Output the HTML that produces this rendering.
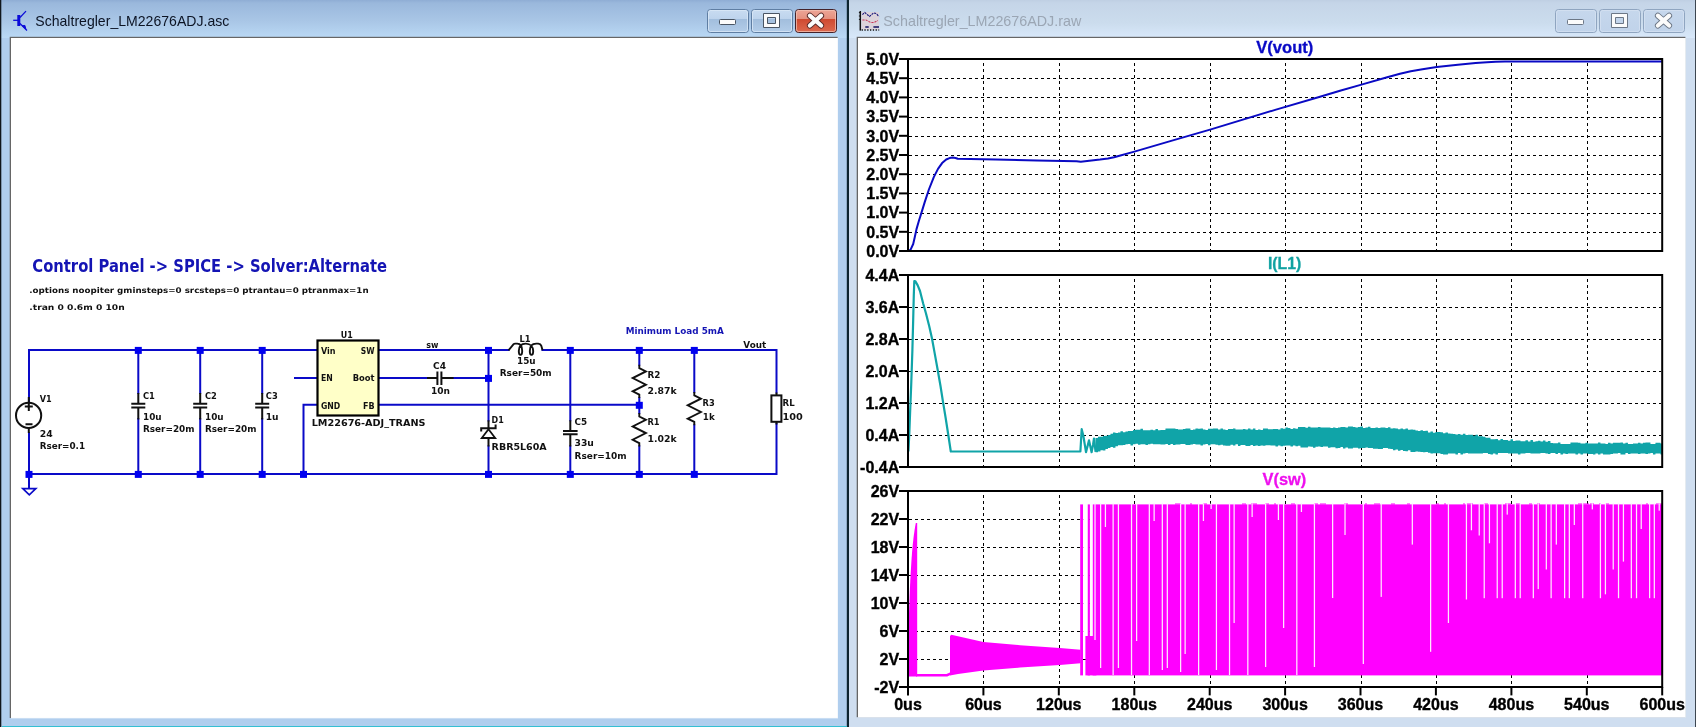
<!DOCTYPE html>
<html lang="de"><head><meta charset="utf-8"><title>Schaltregler_LM22676ADJ - LTspice</title><style>html,body{margin:0;padding:0;background:#fff;overflow:hidden}body{width:1696px;height:727px}svg{will-change:transform}svg text{white-space:pre}</style></head>
<body>
<svg width="1696" height="727" viewBox="0 0 1696 727" style="display:block">
<defs>
<linearGradient id="gAct" x1="0" y1="0" x2="0" y2="1">
 <stop offset="0" stop-color="#8fadd4"/><stop offset="0.08" stop-color="#9ab8dc"/>
 <stop offset="0.55" stop-color="#a9c6e6"/><stop offset="1" stop-color="#bad9f5"/></linearGradient>
<linearGradient id="gIna" x1="0" y1="0" x2="0" y2="1">
 <stop offset="0" stop-color="#bfcfe3"/><stop offset="0.08" stop-color="#c5d5e8"/>
 <stop offset="0.6" stop-color="#cbdced"/><stop offset="1" stop-color="#d8e8fa"/></linearGradient>
<linearGradient id="gBtnA" x1="0" y1="0" x2="0" y2="1">
 <stop offset="0" stop-color="#c9dcf1"/><stop offset="0.42" stop-color="#bdd3ec"/>
 <stop offset="0.43" stop-color="#a2bedd"/><stop offset="1" stop-color="#b3cde9"/></linearGradient>
<linearGradient id="gBtnC" x1="0" y1="0" x2="0" y2="1">
 <stop offset="0" stop-color="#eda697"/><stop offset="0.42" stop-color="#e48f7e"/>
 <stop offset="0.43" stop-color="#cf4a31"/><stop offset="1" stop-color="#dd6a50"/></linearGradient>
<linearGradient id="gBtnI" x1="0" y1="0" x2="0" y2="1">
 <stop offset="0" stop-color="#c6d7ec"/><stop offset="1" stop-color="#c0d3ea"/></linearGradient>
</defs>
<rect x="0" y="0" width="848" height="727" fill="#b0ceee"/>
<rect x="0" y="0" width="848" height="38" fill="url(#gAct)"/>
<rect x="849" y="0" width="847" height="727" fill="#cfdef0"/>
<rect x="849" y="0" width="847" height="38" fill="url(#gIna)"/>
<rect x="0" y="0" width="1.3" height="727" fill="#10161c"/>
<rect x="846.8" y="0" width="2.2" height="727" fill="#0c2430"/>
<rect x="1695" y="0" width="1" height="727" fill="#3c4650"/>
<rect x="2" y="726" width="845" height="1" fill="#35bfd2"/>
<rect x="9.7" y="36.8" width="827.9" height="681.2" fill="#666"/>
<rect x="11" y="38" width="827" height="680.4" fill="#eef4fa"/>
<rect x="11" y="38" width="826.4" height="679.8" fill="#ffffff"/>
<rect x="856.7" y="36.8" width="828.7" height="680.4" fill="#666"/>
<rect x="858" y="38" width="827.8" height="679.6" fill="#eef4fa"/>
<rect x="858" y="38" width="827.2" height="679" fill="#ffffff"/>
<rect x="707.5" y="9.5" width="41" height="23" rx="3" fill="url(#gBtnA)" stroke="#5f7ea3"/>
<rect x="708.5" y="10.5" width="39" height="21" rx="2" fill="none" stroke="#dce9f7" stroke-opacity=".75"/>
<rect x="751.5" y="9.5" width="41" height="23" rx="3" fill="url(#gBtnA)" stroke="#5f7ea3"/>
<rect x="752.5" y="10.5" width="39" height="21" rx="2" fill="none" stroke="#dce9f7" stroke-opacity=".75"/>
<rect x="795.5" y="9.5" width="41" height="23" rx="3" fill="url(#gBtnC)" stroke="#43222a"/>
<rect x="796.5" y="10.5" width="39" height="21" rx="2" fill="none" stroke="#f3c3b6" stroke-opacity=".75"/>
<rect x="719.5" y="19.5" width="16" height="5" rx="1" fill="#fbfbfb" stroke="#4a5563"/>
<path d="M763.5 13.5h16v14h-16z M767.5 17.5v6h8v-6z" fill="#fbfbfb" fill-rule="evenodd" stroke="#4a5563"/>
<path d="M809.9 15.700000000000001L821.1 25.5M821.1 15.700000000000001L809.9 25.5" stroke="#5a2a28" stroke-width="6" stroke-linecap="round" fill="none"/>
<path d="M809.9 15.700000000000001L821.1 25.5M821.1 15.700000000000001L809.9 25.5" stroke="#fbfbfb" stroke-width="4.2" stroke-linecap="round" fill="none"/>
<rect x="1555.5" y="9.5" width="41" height="23" rx="3" fill="url(#gBtnI)" stroke="#8fa5c0"/>
<rect x="1556.5" y="10.5" width="39" height="21" rx="2" fill="none" stroke="#d6e2f1" stroke-opacity=".75"/>
<rect x="1599.5" y="9.5" width="41" height="23" rx="3" fill="url(#gBtnI)" stroke="#8fa5c0"/>
<rect x="1600.5" y="10.5" width="39" height="21" rx="2" fill="none" stroke="#d6e2f1" stroke-opacity=".75"/>
<rect x="1643.5" y="9.5" width="41" height="23" rx="3" fill="url(#gBtnI)" stroke="#8fa5c0"/>
<rect x="1644.5" y="10.5" width="39" height="21" rx="2" fill="none" stroke="#d6e2f1" stroke-opacity=".75"/>
<rect x="1567.5" y="19.5" width="16" height="5" rx="1" fill="#fbfbfb" stroke="#6c7786"/>
<path d="M1611.5 13.5h16v14h-16z M1615.5 17.5v6h8v-6z" fill="#fbfbfb" fill-rule="evenodd" stroke="#6c7786"/>
<path d="M1657.9 15.700000000000001L1669.1 25.5M1669.1 15.700000000000001L1657.9 25.5" stroke="#6c7786" stroke-width="6" stroke-linecap="round" fill="none"/>
<path d="M1657.9 15.700000000000001L1669.1 25.5M1669.1 15.700000000000001L1657.9 25.5" stroke="#fbfbfb" stroke-width="4.2" stroke-linecap="round" fill="none"/>
<g stroke="#0a0ad8" fill="none"><path d="M13.2 20.3H18" stroke-width="1.3"/><path d="M18.8 15v11" stroke-width="3"/><path d="M20 17.5L26 11.2" stroke-width="1.2"/><path d="M20 23.5L27 30.5" stroke-width="1.3"/><path d="M22.3 25.8l2.6 -.4l.9 3.6z" fill="#0a0ad8" stroke-width="1"/></g>
<text x="35.3" y="26.3" font-family='"Liberation Sans", sans-serif' font-size="14.6" fill="#0c1424" textLength="194" lengthAdjust="spacingAndGlyphs">Schaltregler_LM22676ADJ.asc</text>
<g fill="none"><rect x="861.4" y="12" width="17.6" height="17.6" fill="#dcd3da"/><path d="M860.3 11V30.6" stroke="#111" stroke-width="1.5"/><path d="M858.9 12.6h1.4M858.9 16h1.4M858.9 19.4h1.4" stroke="#111" stroke-width="1"/><path d="M861.6 30h17.6" stroke="#111" stroke-width="1.5" stroke-dasharray="1.3 1.5"/><path d="M862.4 14.6L864.7 12.4L869.5 16.5L873.6 12.8L876.4 13.6L878.9 16.5" stroke="#15157a" stroke-width="1.1" stroke-dasharray="2.2 .9"/><path d="M862.4 20H866L870.6 22.5H874L877.8 20.4" stroke="#c83a5a" stroke-width="1.1" stroke-dasharray="2.2 1"/><path d="M865.3 27h3.4M873.4 27h5.6" stroke="#101060" stroke-width="1.4"/></g>
<text x="883.3" y="26.3" font-family='"Liberation Sans", sans-serif' font-size="14.6" fill="#9ba6b4" textLength="198" lengthAdjust="spacingAndGlyphs">Schaltregler_LM22676ADJ.raw</text>
<g stroke="#0a0ac8" stroke-width="2" fill="none" stroke-linecap="square">
<path d="M29 402V350H317"/>
<path d="M29 433V488"/>
<path d="M29 474H776.5V424"/>
<path d="M138.3 350V393M138.3 419V474"/>
<path d="M200.2 350V393M200.2 419V474"/>
<path d="M262.2 350V393M262.2 419V474"/>
<path d="M295 378H317"/>
<path d="M317 404.8H303.5V474"/>
<path d="M379 350H508.5"/>
<path d="M379 378H427M453.5 378H488.5"/>
<path d="M379 404.8H639.3"/>
<path d="M488.5 350V420.5M488.5 446.3V474"/>
<path d="M542.5 350H776.5V392.5"/>
<path d="M570.3 350V420.3M570.3 446.3V474"/>
<path d="M639.3 350V364.7M639.3 398V413.1M639.3 446.3V474"/>
<path d="M694.3 350V392M694.3 425.2V474"/>
<path d="M22.8 488.6H35.8L29.3 494.9Z" stroke-width="1.7" stroke-linecap="butt" stroke-linejoin="miter"/>
</g>
<rect x="134.8" y="346.9" width="7" height="7" fill="#0000f0"/>
<rect x="196.7" y="346.9" width="7" height="7" fill="#0000f0"/>
<rect x="258.7" y="346.9" width="7" height="7" fill="#0000f0"/>
<rect x="485.0" y="346.9" width="7" height="7" fill="#0000f0"/>
<rect x="566.8" y="346.9" width="7" height="7" fill="#0000f0"/>
<rect x="635.8" y="346.9" width="7" height="7" fill="#0000f0"/>
<rect x="690.8" y="346.9" width="7" height="7" fill="#0000f0"/>
<rect x="25.5" y="470.9" width="7" height="7" fill="#0000f0"/>
<rect x="134.8" y="470.9" width="7" height="7" fill="#0000f0"/>
<rect x="196.7" y="470.9" width="7" height="7" fill="#0000f0"/>
<rect x="258.7" y="470.9" width="7" height="7" fill="#0000f0"/>
<rect x="300.0" y="470.9" width="7" height="7" fill="#0000f0"/>
<rect x="485.0" y="470.9" width="7" height="7" fill="#0000f0"/>
<rect x="566.8" y="470.9" width="7" height="7" fill="#0000f0"/>
<rect x="635.8" y="470.9" width="7" height="7" fill="#0000f0"/>
<rect x="690.8" y="470.9" width="7" height="7" fill="#0000f0"/>
<rect x="485.0" y="374.9" width="7" height="7" fill="#0000f0"/>
<rect x="635.8" y="401.8" width="7" height="7" fill="#0000f0"/>
<g stroke="#101010" stroke-width="2" fill="none">
<circle cx="28.6" cy="415.4" r="12.6"/>
<path d="M28.8 397V411M24.8 406.6H32.8M25.5 424.2H32.5M28.8 428V433"/>
<path d="M138.3 393V403.8M131.3 403.8H145.3M131.3 407.4H145.3M138.3 407.4V419.5"/>
<path d="M200.2 393V403.8M193.2 403.8H207.2M193.2 407.4H207.2M200.2 407.4V419.5"/>
<path d="M262.2 393V403.8M255.2 403.8H269.2M255.2 407.4H269.2M262.2 407.4V419.5"/>
<path d="M570.3 420.3V431.1M563.0 431.1H577.5999999999999M563.0 434.3H577.5999999999999M570.3 434.3V446.5"/>
<path d="M427 378H437.4M437.4 371.6V385M441.4 371.6V385M441.4 378H453.6"/>
<rect x="317.5" y="340.5" width="61" height="75" fill="#ffffc8" stroke="#000" stroke-width="2.2"/>
<path d="M488.5 420.3V428.3M488.5 438V446.4" />
<path d="M481.2 431.6V428.3H495.6V424.5" stroke-linejoin="miter"/>
<path d="M488.5 429.3L495.2 438H481.8Z" stroke-width="1.8" stroke-linejoin="miter"/>
<path d="M508.5 350.3L513.6 344.2Q514.2 343.6 515.2 343.6H517.2C520.6 343.6 522.2 347 522.2 351C522.2 356.2 518.8 356.2 518.8 351C518.8 346 521.6 343.6 525.8 343.6C530.6 343.6 533.2 347 533.2 351C533.2 356.2 529.8 356.2 529.8 351C529.8 346 532.2 343.6 536.2 343.6H538.2Q540.6 343.8 541.2 345.6L542.6 350.3" stroke-width="1.9"/>
<path d="M639.3 364.7v3.4l6.6 3.3l-13.2 6.65l13.2 6.65l-13.2 6.65l6.6 3.3v3.4" stroke-linejoin="miter" stroke-width="1.9"/>
<path d="M639.3 413.1v3.4l6.6 3.3l-13.2 6.65l13.2 6.65l-13.2 6.65l6.6 3.3v3.4" stroke-linejoin="miter" stroke-width="1.9"/>
<path d="M694.3 392v3.4l6.6 3.3l-13.2 6.65l13.2 6.65l-13.2 6.65l6.6 3.3v3.4" stroke-linejoin="miter" stroke-width="1.9"/>
<rect x="771.4" y="395.4" width="10" height="26.4" fill="#fff"/>
<path d="M776.5 392.4V395M776.5 422V424.5"/>
</g>
<text x="32.3" y="272.2" font-family='"DejaVu Sans", "Liberation Sans", sans-serif' font-size="17" font-weight="bold" fill="#1414b4" textLength="354.7" lengthAdjust="spacingAndGlyphs">Control Panel -&gt; SPICE -&gt; Solver:Alternate</text>
<text x="29.3" y="293.3" font-family='"DejaVu Sans", "Liberation Sans", sans-serif' font-size="7.9" font-weight="bold" fill="#111" textLength="339.3" lengthAdjust="spacingAndGlyphs">.options noopiter gminsteps=0 srcsteps=0 ptrantau=0 ptranmax=1n</text>
<text x="29.3" y="310.1" font-family='"DejaVu Sans", "Liberation Sans", sans-serif' font-size="7.9" font-weight="bold" fill="#111" textLength="95.4" lengthAdjust="spacingAndGlyphs">.tran 0 0.6m 0 10n</text>
<text x="39.7" y="401.6" font-family='"DejaVu Sans", "Liberation Sans", sans-serif' font-size="8.0" font-weight="bold" fill="#111" textLength="11.9" lengthAdjust="spacingAndGlyphs">V1</text>
<text x="39.7" y="436.6" font-family='"DejaVu Sans", "Liberation Sans", sans-serif' font-size="8.0" font-weight="bold" fill="#111" textLength="12.9" lengthAdjust="spacingAndGlyphs">24</text>
<text x="39.7" y="448.6" font-family='"DejaVu Sans", "Liberation Sans", sans-serif' font-size="8.0" font-weight="bold" fill="#111" textLength="45.4" lengthAdjust="spacingAndGlyphs">Rser=0.1</text>
<text x="143.0" y="398.8" font-family='"DejaVu Sans", "Liberation Sans", sans-serif' font-size="8.0" font-weight="bold" fill="#111" textLength="11.9" lengthAdjust="spacingAndGlyphs">C1</text>
<text x="143.0" y="419.6" font-family='"DejaVu Sans", "Liberation Sans", sans-serif' font-size="8.0" font-weight="bold" fill="#111" textLength="18.6" lengthAdjust="spacingAndGlyphs">10u</text>
<text x="143.0" y="431.6" font-family='"DejaVu Sans", "Liberation Sans", sans-serif' font-size="8.0" font-weight="bold" fill="#111" textLength="51.5" lengthAdjust="spacingAndGlyphs">Rser=20m</text>
<text x="205.0" y="398.8" font-family='"DejaVu Sans", "Liberation Sans", sans-serif' font-size="8.0" font-weight="bold" fill="#111" textLength="11.9" lengthAdjust="spacingAndGlyphs">C2</text>
<text x="205.0" y="419.6" font-family='"DejaVu Sans", "Liberation Sans", sans-serif' font-size="8.0" font-weight="bold" fill="#111" textLength="18.6" lengthAdjust="spacingAndGlyphs">10u</text>
<text x="205.0" y="431.6" font-family='"DejaVu Sans", "Liberation Sans", sans-serif' font-size="8.0" font-weight="bold" fill="#111" textLength="51.5" lengthAdjust="spacingAndGlyphs">Rser=20m</text>
<text x="265.8" y="398.8" font-family='"DejaVu Sans", "Liberation Sans", sans-serif' font-size="8.0" font-weight="bold" fill="#111" textLength="11.9" lengthAdjust="spacingAndGlyphs">C3</text>
<text x="265.8" y="419.6" font-family='"DejaVu Sans", "Liberation Sans", sans-serif' font-size="8.0" font-weight="bold" fill="#111" textLength="12.8" lengthAdjust="spacingAndGlyphs">1u</text>
<text x="340.7" y="337.6" font-family='"DejaVu Sans", "Liberation Sans", sans-serif' font-size="8.0" font-weight="bold" fill="#111" textLength="12.0" lengthAdjust="spacingAndGlyphs">U1</text>
<text x="321.0" y="353.5" font-family='"DejaVu Sans", "Liberation Sans", sans-serif' font-size="8.0" font-weight="bold" fill="#111" textLength="14.6" lengthAdjust="spacingAndGlyphs">Vin</text>
<text x="321.0" y="381.4" font-family='"DejaVu Sans", "Liberation Sans", sans-serif' font-size="8.0" font-weight="bold" fill="#111" textLength="11.8" lengthAdjust="spacingAndGlyphs">EN</text>
<text x="321.0" y="408.5" font-family='"DejaVu Sans", "Liberation Sans", sans-serif' font-size="8.0" font-weight="bold" fill="#111" textLength="19.3" lengthAdjust="spacingAndGlyphs">GND</text>
<text x="360.8" y="353.5" font-family='"DejaVu Sans", "Liberation Sans", sans-serif' font-size="8.0" font-weight="bold" fill="#111" textLength="13.8" lengthAdjust="spacingAndGlyphs">SW</text>
<text x="352.7" y="381.4" font-family='"DejaVu Sans", "Liberation Sans", sans-serif' font-size="8.0" font-weight="bold" fill="#111" textLength="21.9" lengthAdjust="spacingAndGlyphs">Boot</text>
<text x="363.0" y="408.5" font-family='"DejaVu Sans", "Liberation Sans", sans-serif' font-size="8.0" font-weight="bold" fill="#111" textLength="11.6" lengthAdjust="spacingAndGlyphs">FB</text>
<text x="311.7" y="425.8" font-family='"DejaVu Sans", "Liberation Sans", sans-serif' font-size="8.0" font-weight="bold" fill="#111" textLength="113.9" lengthAdjust="spacingAndGlyphs">LM22676-ADJ_TRANS</text>
<text x="426.3" y="347.6" font-family='"DejaVu Sans", "Liberation Sans", sans-serif' font-size="8.0" font-weight="bold" fill="#111" textLength="12.2" lengthAdjust="spacingAndGlyphs">sw</text>
<text x="433.0" y="368.7" font-family='"DejaVu Sans", "Liberation Sans", sans-serif' font-size="8.0" font-weight="bold" fill="#111" textLength="13.0" lengthAdjust="spacingAndGlyphs">C4</text>
<text x="431.0" y="393.7" font-family='"DejaVu Sans", "Liberation Sans", sans-serif' font-size="8.0" font-weight="bold" fill="#111" textLength="19.0" lengthAdjust="spacingAndGlyphs">10n</text>
<text x="519.5" y="341.5" font-family='"DejaVu Sans", "Liberation Sans", sans-serif' font-size="8.0" font-weight="bold" fill="#111" textLength="11.1" lengthAdjust="spacingAndGlyphs">L1</text>
<text x="517.0" y="363.6" font-family='"DejaVu Sans", "Liberation Sans", sans-serif' font-size="8.0" font-weight="bold" fill="#111" textLength="18.6" lengthAdjust="spacingAndGlyphs">15u</text>
<text x="499.7" y="375.5" font-family='"DejaVu Sans", "Liberation Sans", sans-serif' font-size="8.0" font-weight="bold" fill="#111" textLength="52.0" lengthAdjust="spacingAndGlyphs">Rser=50m</text>
<text x="491.6" y="422.7" font-family='"DejaVu Sans", "Liberation Sans", sans-serif' font-size="8.0" font-weight="bold" fill="#111" textLength="12.2" lengthAdjust="spacingAndGlyphs">D1</text>
<text x="491.6" y="449.6" font-family='"DejaVu Sans", "Liberation Sans", sans-serif' font-size="8.0" font-weight="bold" fill="#111" textLength="55.1" lengthAdjust="spacingAndGlyphs">RBR5L60A</text>
<text x="574.6" y="425.3" font-family='"DejaVu Sans", "Liberation Sans", sans-serif' font-size="8.0" font-weight="bold" fill="#111" textLength="12.6" lengthAdjust="spacingAndGlyphs">C5</text>
<text x="574.6" y="446.4" font-family='"DejaVu Sans", "Liberation Sans", sans-serif' font-size="8.0" font-weight="bold" fill="#111" textLength="19.3" lengthAdjust="spacingAndGlyphs">33u</text>
<text x="574.6" y="458.5" font-family='"DejaVu Sans", "Liberation Sans", sans-serif' font-size="8.0" font-weight="bold" fill="#111" textLength="52.1" lengthAdjust="spacingAndGlyphs">Rser=10m</text>
<text x="647.5" y="377.5" font-family='"DejaVu Sans", "Liberation Sans", sans-serif' font-size="8.0" font-weight="bold" fill="#111" textLength="12.9" lengthAdjust="spacingAndGlyphs">R2</text>
<text x="647.5" y="393.7" font-family='"DejaVu Sans", "Liberation Sans", sans-serif' font-size="8.0" font-weight="bold" fill="#111" textLength="29.1" lengthAdjust="spacingAndGlyphs">2.87k</text>
<text x="647.5" y="425.3" font-family='"DejaVu Sans", "Liberation Sans", sans-serif' font-size="8.0" font-weight="bold" fill="#111" textLength="12.1" lengthAdjust="spacingAndGlyphs">R1</text>
<text x="647.5" y="441.5" font-family='"DejaVu Sans", "Liberation Sans", sans-serif' font-size="8.0" font-weight="bold" fill="#111" textLength="29.1" lengthAdjust="spacingAndGlyphs">1.02k</text>
<text x="702.6" y="405.6" font-family='"DejaVu Sans", "Liberation Sans", sans-serif' font-size="8.0" font-weight="bold" fill="#111" textLength="12.1" lengthAdjust="spacingAndGlyphs">R3</text>
<text x="702.8" y="420.3" font-family='"DejaVu Sans", "Liberation Sans", sans-serif' font-size="8.0" font-weight="bold" fill="#111" textLength="11.9" lengthAdjust="spacingAndGlyphs">1k</text>
<text x="782.6" y="405.9" font-family='"DejaVu Sans", "Liberation Sans", sans-serif' font-size="8.0" font-weight="bold" fill="#111" textLength="12.1" lengthAdjust="spacingAndGlyphs">RL</text>
<text x="782.6" y="420.4" font-family='"DejaVu Sans", "Liberation Sans", sans-serif' font-size="8.0" font-weight="bold" fill="#111" textLength="20.3" lengthAdjust="spacingAndGlyphs">100</text>
<text x="625.7" y="334.1" font-family='"DejaVu Sans", "Liberation Sans", sans-serif' font-size="8.0" font-weight="bold" fill="#1414b4" textLength="98.2" lengthAdjust="spacingAndGlyphs">Minimum Load 5mA</text>
<text x="743.3" y="347.9" font-family='"DejaVu Sans", "Liberation Sans", sans-serif' font-size="8.0" font-weight="bold" fill="#111" textLength="22.9" lengthAdjust="spacingAndGlyphs">Vout</text>
<g stroke="#000" stroke-width="1" stroke-dasharray="3 3" shape-rendering="crispEdges">
<path d="M909 78.5H1661.2"/>
<path d="M909 97.5H1661.2"/>
<path d="M909 117.5H1661.2"/>
<path d="M909 136.5H1661.2"/>
<path d="M909 155.5H1661.2"/>
<path d="M909 174.5H1661.2"/>
<path d="M909 193.5H1661.2"/>
<path d="M909 213.5H1661.2"/>
<path d="M909 232.5H1661.2"/>
<path d="M983.5 63V250"/>
<path d="M1059.5 63V250"/>
<path d="M1134.5 63V250"/>
<path d="M1210.5 63V250"/>
<path d="M1285.5 63V250"/>
<path d="M1361.5 63V250"/>
<path d="M1436.5 63V250"/>
<path d="M1511.5 63V250"/>
<path d="M1587.5 63V250"/>
</g>
<polyline fill="none" stroke="#0a0ac4" stroke-width="2" stroke-linejoin="round" points="908.8,251 910.6,249.6 913.2,244 914.8,237 916.5,229.1 919,220.5 921.5,212.6 924.8,201.9 928.9,189.5 933.8,177.1 938,168.9 942.1,163.1 946.2,159.5 949.5,158.1 952.8,157.6 955.5,158 957.8,158.8 995.7,159.5 1037,160.5 1076.6,161.2 1080.8,161.8 1085,161.3 1091.5,160.5 1100,159.6 1108,158.5 1114,157.2 1119.5,155.7 1134.4,151.6 1172,140.6 1210.9,129.4 1276,109.6 1320,96.8 1340,90.8 1360.6,84.9 1387.2,77.2 1400,73.8 1410.8,71.3 1422.5,69.2 1436.7,67.1 1457.9,64.7 1475.6,63.1 1487,62.3 1495.7,61.8 1505,61.6 1662,61.6"/>
<rect x="908" y="59" width="754.2" height="192" fill="none" stroke="#000" stroke-width="2"/>
<path d="M899 59.0H908" stroke="#000" stroke-width="2"/>
<text x="899.2" y="64.8" text-anchor="end" font-family='"Liberation Sans", sans-serif' font-size="16" font-weight="bold" fill="#000" stroke="#000" stroke-width=".35">5.0V</text>
<path d="M899 78.2H908" stroke="#000" stroke-width="2"/>
<text x="899.2" y="84.0" text-anchor="end" font-family='"Liberation Sans", sans-serif' font-size="16" font-weight="bold" fill="#000" stroke="#000" stroke-width=".35">4.5V</text>
<path d="M899 97.4H908" stroke="#000" stroke-width="2"/>
<text x="899.2" y="103.2" text-anchor="end" font-family='"Liberation Sans", sans-serif' font-size="16" font-weight="bold" fill="#000" stroke="#000" stroke-width=".35">4.0V</text>
<path d="M899 116.6H908" stroke="#000" stroke-width="2"/>
<text x="899.2" y="122.4" text-anchor="end" font-family='"Liberation Sans", sans-serif' font-size="16" font-weight="bold" fill="#000" stroke="#000" stroke-width=".35">3.5V</text>
<path d="M899 135.8H908" stroke="#000" stroke-width="2"/>
<text x="899.2" y="141.6" text-anchor="end" font-family='"Liberation Sans", sans-serif' font-size="16" font-weight="bold" fill="#000" stroke="#000" stroke-width=".35">3.0V</text>
<path d="M899 155.0H908" stroke="#000" stroke-width="2"/>
<text x="899.2" y="160.8" text-anchor="end" font-family='"Liberation Sans", sans-serif' font-size="16" font-weight="bold" fill="#000" stroke="#000" stroke-width=".35">2.5V</text>
<path d="M899 174.2H908" stroke="#000" stroke-width="2"/>
<text x="899.2" y="180.0" text-anchor="end" font-family='"Liberation Sans", sans-serif' font-size="16" font-weight="bold" fill="#000" stroke="#000" stroke-width=".35">2.0V</text>
<path d="M899 193.4H908" stroke="#000" stroke-width="2"/>
<text x="899.2" y="199.2" text-anchor="end" font-family='"Liberation Sans", sans-serif' font-size="16" font-weight="bold" fill="#000" stroke="#000" stroke-width=".35">1.5V</text>
<path d="M899 212.6H908" stroke="#000" stroke-width="2"/>
<text x="899.2" y="218.4" text-anchor="end" font-family='"Liberation Sans", sans-serif' font-size="16" font-weight="bold" fill="#000" stroke="#000" stroke-width=".35">1.0V</text>
<path d="M899 231.8H908" stroke="#000" stroke-width="2"/>
<text x="899.2" y="237.6" text-anchor="end" font-family='"Liberation Sans", sans-serif' font-size="16" font-weight="bold" fill="#000" stroke="#000" stroke-width=".35">0.5V</text>
<path d="M899 251.0H908" stroke="#000" stroke-width="2"/>
<text x="899.2" y="256.8" text-anchor="end" font-family='"Liberation Sans", sans-serif' font-size="16" font-weight="bold" fill="#000" stroke="#000" stroke-width=".35">0.0V</text>
<text x="1256.3" y="52.6" font-family='"Liberation Sans", sans-serif' textLength="57.0" lengthAdjust="spacingAndGlyphs" font-size="16" font-weight="bold" fill="#0a0ac6" stroke="#0a0ac6" stroke-width=".3">V(vout)</text>
<g stroke="#000" stroke-width="1" stroke-dasharray="3 3" shape-rendering="crispEdges">
<path d="M909 307.5H1661.2"/>
<path d="M909 339.5H1661.2"/>
<path d="M909 371.5H1661.2"/>
<path d="M909 403.5H1661.2"/>
<path d="M909 435.5H1661.2"/>
<path d="M983.5 279V466"/>
<path d="M1059.5 279V466"/>
<path d="M1134.5 279V466"/>
<path d="M1210.5 279V466"/>
<path d="M1285.5 279V466"/>
<path d="M1361.5 279V466"/>
<path d="M1436.5 279V466"/>
<path d="M1511.5 279V466"/>
<path d="M1587.5 279V466"/>
</g>
<polyline fill="none" stroke="#10a4a8" stroke-width="2.2" stroke-linejoin="round" points="908.4,451.5 909.3,433.6 910.2,410 911.2,385 912.4,350 913.2,319.4 913.8,295 914.3,281 915.4,281.3 917.7,285.4 920,291 923.1,303.3 926,313.5 929.3,326.6 932,338.5 934.7,353.4 937.7,370 940.5,386 943,401.8 945.5,417 948.3,435 950.8,451.5 1080.4,451.5 1081.7,429.2 1083.4,436 1086,452.2 1087.6,446 1089,440.3 1091.6,452.2 1093,445 1094,438.5 1095.6,451.8"/>
<polygon fill="#10a4a8" points="1095.5,437.9 1097.9,437.9 1098.0,436.7 1100.4,436.7 1100.5,436.8 1102.9,436.8 1103.0,436.1 1105.4,436.1 1105.5,435.8 1107.9,435.8 1108.0,435.0 1110.4,435.0 1110.5,433.8 1112.9,433.8 1113.0,432.4 1115.4,432.4 1115.5,433.0 1117.9,433.0 1118.0,432.6 1120.4,432.6 1120.5,431.2 1122.9,431.2 1123.0,432.3 1125.4,432.3 1125.5,431.4 1127.9,431.4 1128.0,430.9 1130.4,430.9 1130.5,430.9 1132.9,430.9 1133.0,430.0 1135.4,430.0 1135.5,429.8 1137.9,429.8 1138.0,429.8 1140.4,429.8 1140.5,428.8 1142.9,428.8 1143.0,430.2 1145.4,430.2 1145.5,430.2 1147.9,430.2 1148.0,430.2 1150.4,430.2 1150.5,429.7 1152.9,429.7 1153.0,430.2 1155.4,430.2 1155.5,429.1 1157.9,429.1 1158.0,430.2 1160.4,430.2 1160.5,430.1 1162.9,430.1 1163.0,430.1 1165.4,430.1 1165.5,428.6 1167.9,428.6 1168.0,428.6 1170.4,428.6 1170.5,428.6 1172.9,428.6 1173.0,428.6 1175.4,428.6 1175.5,428.9 1177.9,428.9 1178.0,429.5 1180.4,429.5 1180.5,429.5 1182.9,429.5 1183.0,428.9 1185.4,428.9 1185.5,428.5 1187.9,428.5 1188.0,428.5 1190.4,428.5 1190.5,430.0 1192.9,430.0 1193.0,429.4 1195.4,429.4 1195.5,428.4 1197.9,428.4 1198.0,428.8 1200.4,428.8 1200.5,428.4 1202.9,428.4 1203.0,429.4 1205.4,429.4 1205.5,429.9 1207.9,429.9 1208.0,428.8 1210.4,428.8 1210.5,428.8 1212.9,428.8 1213.0,428.4 1215.4,428.4 1215.5,428.5 1217.9,428.5 1218.0,429.5 1220.4,429.5 1220.5,428.5 1222.9,428.5 1223.0,429.5 1225.4,429.5 1225.5,430.0 1227.9,430.0 1228.0,428.9 1230.4,428.9 1230.5,428.9 1232.9,428.9 1233.0,428.5 1235.4,428.5 1235.5,429.5 1237.9,429.5 1238.0,429.5 1240.4,429.5 1240.5,429.5 1242.9,429.5 1243.0,428.9 1245.4,428.9 1245.5,429.6 1247.9,429.6 1248.0,428.6 1250.4,428.6 1250.5,429.6 1252.9,429.6 1253.0,428.6 1255.4,428.6 1255.5,430.1 1257.9,430.1 1258.0,429.6 1260.4,429.6 1260.5,430.1 1262.9,430.1 1263.0,428.5 1265.4,428.5 1265.5,428.4 1267.9,428.4 1268.0,429.3 1270.4,429.3 1270.5,429.2 1272.9,429.2 1273.0,429.1 1275.4,429.1 1275.5,429.0 1277.9,429.0 1278.0,429.4 1280.4,429.4 1280.5,428.2 1282.9,428.2 1283.0,428.7 1285.4,428.7 1285.5,427.6 1287.9,427.6 1288.0,427.9 1290.4,427.9 1290.5,428.9 1292.9,428.9 1293.0,428.3 1295.4,428.3 1295.5,428.7 1297.9,428.7 1298.0,427.1 1300.4,427.1 1300.5,427.0 1302.9,427.0 1303.0,426.9 1305.4,426.9 1305.5,427.8 1307.9,427.8 1308.0,426.7 1310.4,426.7 1310.5,427.6 1312.9,427.6 1313.0,427.6 1315.4,427.6 1315.5,427.6 1317.9,427.6 1318.0,427.0 1320.4,427.0 1320.5,427.6 1322.9,427.6 1323.0,427.6 1325.4,427.6 1325.5,427.6 1327.9,427.6 1328.0,427.6 1330.4,427.6 1330.5,428.0 1332.9,428.0 1333.0,427.5 1335.4,427.5 1335.5,428.0 1337.9,428.0 1338.0,427.5 1340.4,427.5 1340.5,426.9 1342.9,426.9 1343.0,426.9 1345.4,426.9 1345.5,427.5 1347.9,427.5 1348.0,426.5 1350.4,426.5 1350.5,426.5 1352.9,426.5 1353.0,426.9 1355.4,426.9 1355.5,427.5 1357.9,427.5 1358.0,426.9 1360.4,426.9 1360.5,426.5 1362.9,426.5 1363.0,428.0 1365.4,428.0 1365.5,427.4 1367.9,427.4 1368.0,426.8 1370.4,426.8 1370.5,427.9 1372.9,427.9 1373.0,427.9 1375.4,427.9 1375.5,427.4 1377.9,427.4 1378.0,427.9 1380.4,427.9 1380.5,427.4 1382.9,427.4 1383.0,427.4 1385.4,427.4 1385.5,428.1 1387.9,428.1 1388.0,427.2 1390.4,427.2 1390.5,428.5 1392.9,428.5 1393.0,428.3 1395.4,428.3 1395.5,428.5 1397.9,428.5 1398.0,429.3 1400.4,429.3 1400.5,428.4 1402.9,428.4 1403.0,429.3 1405.4,429.3 1405.5,428.5 1407.9,428.5 1408.0,429.7 1410.4,429.7 1410.5,429.4 1412.9,429.4 1413.0,429.7 1415.4,429.7 1415.5,430.6 1417.9,430.6 1418.0,430.9 1420.4,430.9 1420.5,430.2 1422.9,430.2 1423.0,430.9 1425.4,430.9 1425.5,430.8 1427.9,430.8 1428.0,432.6 1430.4,432.6 1430.5,431.4 1432.9,431.4 1433.0,432.8 1435.4,432.8 1435.5,431.9 1437.9,431.9 1438.0,432.0 1440.4,432.0 1440.5,432.2 1442.9,432.2 1443.0,433.3 1445.4,433.3 1445.5,432.5 1447.9,432.5 1448.0,433.6 1450.4,433.6 1450.5,433.7 1452.9,433.7 1453.0,433.9 1455.4,433.9 1455.5,434.5 1457.9,434.5 1458.0,434.1 1460.4,434.1 1460.5,434.8 1462.9,434.8 1463.0,433.8 1465.4,433.8 1465.5,435.0 1467.9,435.0 1468.0,434.7 1470.4,434.7 1470.5,434.8 1472.9,434.8 1473.0,435.8 1475.4,435.8 1475.5,434.8 1477.9,434.8 1478.0,436.3 1480.4,436.3 1480.5,436.2 1482.9,436.2 1483.0,436.7 1485.4,436.7 1485.5,437.8 1487.9,437.8 1488.0,437.7 1490.4,437.7 1490.5,439.3 1492.9,439.3 1493.0,439.2 1495.4,439.2 1495.5,439.1 1497.9,439.1 1498.0,440.3 1500.4,440.3 1500.5,438.9 1502.9,438.9 1503.0,440.0 1505.4,440.0 1505.5,440.1 1507.9,440.1 1508.0,440.7 1510.4,440.7 1510.5,439.3 1512.9,439.3 1513.0,440.9 1515.4,440.9 1515.5,440.5 1517.9,440.5 1518.0,440.6 1520.4,440.6 1520.5,441.2 1522.9,441.2 1523.0,441.3 1525.4,441.3 1525.5,440.3 1527.9,440.3 1528.0,441.5 1530.4,441.5 1530.5,440.1 1532.9,440.1 1533.0,441.7 1535.4,441.7 1535.5,441.3 1537.9,441.3 1538.0,440.8 1540.4,440.8 1540.5,441.5 1542.9,441.5 1543.0,440.6 1545.4,440.6 1545.5,441.8 1547.9,441.8 1548.0,441.1 1550.4,441.1 1550.5,443.0 1552.9,443.0 1553.0,443.3 1555.4,443.3 1555.5,443.2 1557.9,443.2 1558.0,442.4 1560.4,442.4 1560.5,443.9 1562.9,443.9 1563.0,443.9 1565.4,443.9 1565.5,443.9 1567.9,443.9 1568.0,443.9 1570.4,443.9 1570.5,442.4 1572.9,442.4 1573.0,442.4 1575.4,442.4 1575.5,442.4 1577.9,442.4 1578.0,442.8 1580.4,442.8 1580.5,443.4 1582.9,443.4 1583.0,443.4 1585.4,443.4 1585.5,442.8 1587.9,442.8 1588.0,443.4 1590.4,443.4 1590.5,443.4 1592.9,443.4 1593.0,443.4 1595.4,443.4 1595.5,443.4 1597.9,443.4 1598.0,442.4 1600.4,442.4 1600.5,443.4 1602.9,443.4 1603.0,443.4 1605.4,443.4 1605.5,443.9 1607.9,443.9 1608.0,442.8 1610.4,442.8 1610.5,443.4 1612.9,443.4 1613.0,442.8 1615.4,442.8 1615.5,442.8 1617.9,442.8 1618.0,442.8 1620.4,442.8 1620.5,442.4 1622.9,442.4 1623.0,443.4 1625.4,443.4 1625.5,442.8 1627.9,442.8 1628.0,443.9 1630.4,443.9 1630.5,443.9 1632.9,443.9 1633.0,443.4 1635.4,443.4 1635.5,443.4 1637.9,443.4 1638.0,442.8 1640.4,442.8 1640.5,443.4 1642.9,443.4 1643.0,442.8 1645.4,442.8 1645.5,442.4 1647.9,442.4 1648.0,442.4 1650.4,442.4 1650.5,443.9 1652.9,443.9 1653.0,443.9 1655.4,443.9 1655.5,442.8 1657.9,442.8 1658.0,442.8 1660.4,442.8 1660.5,443.4 1662.2,443.4 1662.2,454.5 1660.5,454.5 1660.4,453.5 1658.0,453.5 1657.9,453.5 1655.5,453.5 1655.4,454.5 1653.0,454.5 1652.9,453.0 1650.5,453.0 1650.4,453.5 1648.0,453.5 1647.9,454.1 1645.5,454.1 1645.4,453.5 1643.0,453.5 1642.9,453.5 1640.5,453.5 1640.4,454.1 1638.0,454.1 1637.9,453.5 1635.5,453.5 1635.4,453.5 1633.0,453.5 1632.9,453.5 1630.5,453.5 1630.4,454.1 1628.0,454.1 1627.9,453.0 1625.5,453.0 1625.4,454.5 1623.0,454.5 1622.9,454.5 1620.5,454.5 1620.4,453.0 1618.0,453.0 1617.9,453.5 1615.5,453.5 1615.4,453.5 1613.0,453.5 1612.9,454.1 1610.5,454.1 1610.4,454.5 1608.0,454.5 1607.9,454.5 1605.5,454.5 1605.4,454.5 1603.0,454.5 1602.9,453.5 1600.5,453.5 1600.4,454.5 1598.0,454.5 1597.9,453.5 1595.5,453.5 1595.4,454.5 1593.0,454.5 1592.9,454.1 1590.5,454.1 1590.4,454.1 1588.0,454.1 1587.9,453.5 1585.5,453.5 1585.4,453.5 1583.0,453.5 1582.9,454.5 1580.5,454.5 1580.4,453.5 1578.0,453.5 1577.9,454.5 1575.5,454.5 1575.4,453.5 1573.0,453.5 1572.9,453.5 1570.5,453.5 1570.4,453.5 1568.0,453.5 1567.9,454.1 1565.5,454.1 1565.4,453.5 1563.0,453.5 1562.9,454.5 1560.5,454.5 1560.4,453.0 1558.0,453.0 1557.9,454.1 1555.5,454.1 1555.4,453.0 1553.0,453.0 1552.9,453.0 1550.5,453.0 1550.4,454.1 1548.0,454.1 1547.9,453.5 1545.5,453.5 1545.4,453.0 1543.0,453.0 1542.9,453.0 1540.5,453.0 1540.4,453.5 1538.0,453.5 1537.9,453.5 1535.5,453.5 1535.4,453.5 1533.0,453.5 1532.9,453.5 1530.5,453.5 1530.4,453.0 1528.0,453.0 1527.9,453.0 1525.5,453.0 1525.4,453.5 1523.0,453.5 1522.9,453.5 1520.5,453.5 1520.4,454.5 1518.0,454.5 1517.9,453.5 1515.5,453.5 1515.4,453.5 1513.0,453.5 1512.9,453.5 1510.5,453.5 1510.4,453.5 1508.0,453.5 1507.9,453.0 1505.5,453.0 1505.4,453.0 1503.0,453.0 1502.9,453.0 1500.5,453.0 1500.4,453.0 1498.0,453.0 1497.9,454.5 1495.5,454.5 1495.4,453.5 1493.0,453.5 1492.9,454.5 1490.5,454.5 1490.4,454.1 1488.0,454.1 1487.9,453.0 1485.5,453.0 1485.4,453.0 1483.0,453.0 1482.9,453.5 1480.5,453.5 1480.4,453.5 1478.0,453.5 1477.9,453.5 1475.5,453.5 1475.4,453.5 1473.0,453.5 1472.9,453.5 1470.5,453.5 1470.4,453.5 1468.0,453.5 1467.9,453.0 1465.5,453.0 1465.4,453.5 1463.0,453.5 1462.9,454.4 1460.5,454.4 1460.4,452.9 1458.0,452.9 1457.9,454.4 1455.5,454.4 1455.4,453.4 1453.0,453.4 1452.9,453.4 1450.5,453.4 1450.4,453.4 1448.0,453.4 1447.9,454.4 1445.5,454.4 1445.4,454.4 1443.0,454.4 1442.9,453.9 1440.5,453.9 1440.4,453.3 1438.0,453.3 1437.9,453.3 1435.5,453.3 1435.4,453.3 1433.0,453.3 1432.9,453.6 1430.5,453.6 1430.4,452.8 1428.0,452.8 1427.9,452.0 1425.5,452.0 1425.4,452.3 1423.0,452.3 1422.9,452.1 1420.5,452.1 1420.4,451.8 1418.0,451.8 1417.9,451.6 1415.5,451.6 1415.4,451.9 1413.0,451.9 1412.9,452.1 1410.5,452.1 1410.4,450.3 1408.0,450.3 1407.9,451.2 1405.5,451.2 1405.4,450.9 1403.0,450.9 1402.9,450.1 1400.5,450.1 1400.4,450.8 1398.0,450.8 1397.9,449.6 1395.5,449.6 1395.4,450.3 1393.0,450.3 1392.9,449.1 1390.5,449.1 1390.4,448.8 1388.0,448.8 1387.9,448.1 1385.5,448.1 1385.4,447.9 1383.0,447.9 1382.9,448.9 1380.5,448.9 1380.4,448.9 1378.0,448.9 1377.9,448.8 1375.5,448.8 1375.4,448.8 1373.0,448.8 1372.9,448.1 1370.5,448.1 1370.4,448.0 1368.0,448.0 1367.9,447.5 1365.5,447.5 1365.4,447.9 1363.0,447.9 1362.9,447.9 1360.5,447.9 1360.4,448.4 1358.0,448.4 1357.9,447.8 1355.5,447.8 1355.4,447.7 1353.0,447.7 1352.9,448.6 1350.5,448.6 1350.4,448.6 1348.0,448.6 1347.9,447.5 1345.5,447.5 1345.4,448.5 1343.0,448.5 1342.9,446.9 1340.5,446.9 1340.4,448.0 1338.0,448.0 1337.9,448.3 1335.5,448.3 1335.4,447.2 1333.0,447.2 1332.9,447.2 1330.5,447.2 1330.4,447.7 1328.0,447.7 1327.9,446.6 1325.5,446.6 1325.4,446.5 1323.0,446.5 1322.9,447.0 1320.5,447.0 1320.4,446.4 1318.0,446.4 1317.9,446.8 1315.5,446.8 1315.4,447.8 1313.0,447.8 1312.9,446.7 1310.5,446.7 1310.4,446.6 1308.0,446.6 1307.9,447.6 1305.5,447.6 1305.4,447.5 1303.0,447.5 1302.9,447.4 1300.5,447.4 1300.4,445.8 1298.0,445.8 1297.9,446.2 1295.5,446.2 1295.4,445.6 1293.0,445.6 1292.9,446.6 1290.5,446.6 1290.4,445.5 1288.0,445.5 1287.9,445.4 1285.5,445.4 1285.4,445.8 1283.0,445.8 1282.9,446.3 1280.5,446.3 1280.4,445.6 1278.0,445.6 1277.9,446.5 1275.5,446.5 1275.4,445.4 1273.0,445.4 1272.9,445.4 1270.5,445.4 1270.4,445.3 1268.0,445.3 1267.9,445.2 1265.5,445.2 1265.4,445.7 1263.0,445.7 1262.9,445.6 1260.5,445.6 1260.4,446.0 1258.0,446.0 1257.9,445.6 1255.5,445.6 1255.4,446.0 1253.0,446.0 1252.9,444.9 1250.5,444.9 1250.4,445.9 1248.0,445.9 1247.9,445.9 1245.5,445.9 1245.4,444.9 1243.0,444.9 1242.9,444.9 1240.5,444.9 1240.4,445.9 1238.0,445.9 1237.9,444.3 1235.5,444.3 1235.4,445.4 1233.0,445.4 1232.9,444.8 1230.5,444.8 1230.4,445.8 1228.0,445.8 1227.9,445.8 1225.5,445.8 1225.4,445.4 1223.0,445.4 1222.9,444.7 1220.5,444.7 1220.4,445.3 1218.0,445.3 1217.9,444.7 1215.5,444.7 1215.4,444.2 1213.0,444.2 1212.9,444.2 1210.5,444.2 1210.4,445.3 1208.0,445.3 1207.9,444.1 1205.5,444.1 1205.4,444.6 1203.0,444.6 1202.9,445.6 1200.5,445.6 1200.4,444.6 1198.0,444.6 1197.9,444.6 1195.5,444.6 1195.4,444.1 1193.0,444.1 1192.9,444.5 1190.5,444.5 1190.4,445.1 1188.0,445.1 1187.9,445.1 1185.5,445.1 1185.4,444.0 1183.0,444.0 1182.9,444.0 1180.5,444.0 1180.4,444.5 1178.0,444.5 1177.9,444.5 1175.5,444.5 1175.4,445.0 1173.0,445.0 1172.9,443.9 1170.5,443.9 1170.4,445.0 1168.0,445.0 1167.9,443.9 1165.5,443.9 1165.4,444.4 1163.0,444.4 1162.9,444.4 1160.5,444.4 1160.4,444.3 1158.0,444.3 1157.9,444.3 1155.5,444.3 1155.4,444.3 1153.0,444.3 1152.9,443.8 1150.5,443.8 1150.4,444.3 1148.0,444.3 1147.9,444.9 1145.5,444.9 1145.4,444.3 1143.0,444.3 1142.9,444.2 1140.5,444.2 1140.4,444.8 1138.0,444.8 1137.9,443.7 1135.5,443.7 1135.4,444.3 1133.0,444.3 1132.9,445.4 1130.5,445.4 1130.4,444.1 1128.0,444.1 1127.9,444.3 1125.5,444.3 1125.4,444.9 1123.0,444.9 1122.9,445.3 1120.5,445.3 1120.4,445.2 1118.0,445.2 1117.9,446.2 1115.5,446.2 1115.4,447.7 1113.0,447.7 1112.9,447.1 1110.5,447.1 1110.4,447.9 1108.0,447.9 1107.9,448.9 1105.5,448.9 1105.4,450.4 1103.0,450.4 1102.9,450.3 1100.5,450.3 1100.4,451.6 1098.0,451.6 1097.9,452.3 1095.5,452.3"/>
<rect x="908" y="275" width="754.2" height="192" fill="none" stroke="#000" stroke-width="2"/>
<path d="M899 275.0H908" stroke="#000" stroke-width="2"/>
<text x="899.2" y="280.8" text-anchor="end" font-family='"Liberation Sans", sans-serif' font-size="16" font-weight="bold" fill="#000" stroke="#000" stroke-width=".35">4.4A</text>
<path d="M899 307.0H908" stroke="#000" stroke-width="2"/>
<text x="899.2" y="312.8" text-anchor="end" font-family='"Liberation Sans", sans-serif' font-size="16" font-weight="bold" fill="#000" stroke="#000" stroke-width=".35">3.6A</text>
<path d="M899 339.0H908" stroke="#000" stroke-width="2"/>
<text x="899.2" y="344.8" text-anchor="end" font-family='"Liberation Sans", sans-serif' font-size="16" font-weight="bold" fill="#000" stroke="#000" stroke-width=".35">2.8A</text>
<path d="M899 371.0H908" stroke="#000" stroke-width="2"/>
<text x="899.2" y="376.8" text-anchor="end" font-family='"Liberation Sans", sans-serif' font-size="16" font-weight="bold" fill="#000" stroke="#000" stroke-width=".35">2.0A</text>
<path d="M899 403.0H908" stroke="#000" stroke-width="2"/>
<text x="899.2" y="408.8" text-anchor="end" font-family='"Liberation Sans", sans-serif' font-size="16" font-weight="bold" fill="#000" stroke="#000" stroke-width=".35">1.2A</text>
<path d="M899 435.0H908" stroke="#000" stroke-width="2"/>
<text x="899.2" y="440.8" text-anchor="end" font-family='"Liberation Sans", sans-serif' font-size="16" font-weight="bold" fill="#000" stroke="#000" stroke-width=".35">0.4A</text>
<path d="M899 467.0H908" stroke="#000" stroke-width="2"/>
<text x="899.2" y="472.8" text-anchor="end" font-family='"Liberation Sans", sans-serif' font-size="16" font-weight="bold" fill="#000" stroke="#000" stroke-width=".35">-0.4A</text>
<text x="1267.9" y="268.7" font-family='"Liberation Sans", sans-serif' textLength="33.4" lengthAdjust="spacingAndGlyphs" font-size="16" font-weight="bold" fill="#12a2a2" stroke="#12a2a2" stroke-width=".3">I(L1)</text>
<g stroke="#000" stroke-width="1" stroke-dasharray="3 3" shape-rendering="crispEdges">
<path d="M909 519.5H1661.2"/>
<path d="M909 547.5H1661.2"/>
<path d="M909 575.5H1661.2"/>
<path d="M909 603.5H1661.2"/>
<path d="M909 631.5H1661.2"/>
<path d="M909 659.5H1661.2"/>
<path d="M983.5 495V686"/>
<path d="M1059.5 495V686"/>
<path d="M1134.5 495V686"/>
<path d="M1210.5 495V686"/>
<path d="M1285.5 495V686"/>
<path d="M1361.5 495V686"/>
<path d="M1436.5 495V686"/>
<path d="M1511.5 495V686"/>
<path d="M1587.5 495V686"/>
</g>
<path d="M908.3 676.6V640Q909.5 585 912 553Q913.6 534 915.8 523H917.2V676.6Z" fill="#ff00ff"/>
<path d="M916 675.2H947L950.5 673.6" stroke="#ff00ff" stroke-width="2.6" fill="none"/>
<path d="M950 675.5V636L951.3 634.8L983.4 642L1020 645.2L1059.8 648L1080.6 649.8V663.2L1059.8 665L1020 667.6L983.4 670.6L958 674Z" fill="#ff00ff"/>
<rect x="1080.2" y="504.4" width="2.8" height="171.0" fill="#ff00ff"/>
<rect x="1085.4" y="636" width="11" height="39.39999999999998" fill="#ff00ff"/>
<rect x="1087.6" y="504.4" width="2.3" height="171.0" fill="#ff00ff"/>
<rect x="1092.6" y="504.4" width="569.6000000000001" height="171.0" fill="#ff00ff"/>
<path d="M1175 503.4h6v1.2h-6zM1190 503.4h2v1.2h-2zM1203 503.4h4v1.2h-4zM1242 503.4h4v1.2h-4zM1251 503.4h6v1.2h-6zM1265 503.4h4v1.2h-4zM1274 503.4h2v1.2h-2zM1291 503.4h4v1.2h-4zM1314 503.4h4v1.2h-4zM1320 503.4h6v1.2h-6zM1344 503.4h4v1.2h-4zM1365 503.4h2v1.2h-2zM1374 503.4h6v1.2h-6zM1391 503.4h4v1.2h-4zM1407 503.4h3v1.2h-3zM1436 503.4h3v1.2h-3zM1444 503.4h2v1.2h-2zM1463 503.4h2v1.2h-2zM1467 503.4h6v1.2h-6zM1484 503.4h4v1.2h-4zM1505 503.4h6v1.2h-6zM1516 503.4h4v1.2h-4zM1529 503.4h3v1.2h-3zM1537 503.4h3v1.2h-3zM1578 503.4h4v1.2h-4zM1583 503.4h6v1.2h-6zM1590 503.4h4v1.2h-4zM1599 503.4h2v1.2h-2zM1606 503.4h3v1.2h-3zM1646 503.4h2v1.2h-2zM1656 503.4h6v1.2h-6z" fill="#ff00ff"/>
<g fill="#ffe6ff">
<rect x="1083.2" y="503.4" width="4.2" height="132.60000000000002" fill="#fff"/>
<rect x="1090" y="503.4" width="2.5" height="132.60000000000002" fill="#fff"/>
<rect x="1094.4" y="503.4" width="1.25" height="136.6"/>
<rect x="1100.0" y="503.4" width="1.25" height="164.6"/>
<rect x="1104.8" y="503.4" width="1.25" height="23.6"/>
<rect x="1112.5" y="503.4" width="1.25" height="171.6"/>
<rect x="1117.8" y="503.4" width="1.25" height="164.6"/>
<rect x="1130.9" y="503.4" width="1.25" height="171.6"/>
<rect x="1136.0" y="503.4" width="1.25" height="137.6"/>
<rect x="1148.7" y="503.4" width="1.25" height="171.6"/>
<rect x="1153.5" y="503.4" width="1.25" height="17.6"/>
<rect x="1161.7" y="503.4" width="1.25" height="166.6"/>
<rect x="1166.7" y="503.4" width="1.25" height="164.6"/>
<rect x="1180.0" y="503.4" width="1.25" height="168.6"/>
<rect x="1184.5" y="503.4" width="1.25" height="150.6"/>
<rect x="1198.0" y="503.4" width="1.25" height="171.6"/>
<rect x="1202.8" y="503.4" width="1.25" height="17.6"/>
<rect x="1210.5" y="503.4" width="1.25" height="5.6"/>
<rect x="1215.8" y="503.4" width="1.25" height="166.6"/>
<rect x="1228.9" y="503.4" width="1.25" height="171.6"/>
<rect x="1233.5" y="503.4" width="1.25" height="119.6"/>
<rect x="1247.2" y="503.4" width="1.25" height="171.6"/>
<rect x="1251.5" y="503.4" width="1.25" height="13.6"/>
<rect x="1265.0" y="503.4" width="1.25" height="163.6"/>
<rect x="1277.8" y="503.4" width="1.25" height="16.6"/>
<rect x="1283.0" y="503.4" width="1.25" height="124.6"/>
<rect x="1296.2" y="503.4" width="1.25" height="171.6"/>
<rect x="1300.8" y="503.4" width="1.25" height="8.6"/>
<rect x="1313.8" y="503.4" width="1.25" height="163.6"/>
<rect x="1332.0" y="503.4" width="1.25" height="94.6"/>
<rect x="1344.4" y="503.4" width="1.25" height="31.6"/>
<rect x="1362.7" y="503.4" width="1.25" height="160.6"/>
<rect x="1380.6" y="503.4" width="1.25" height="93.5"/>
<rect x="1411.7" y="503.4" width="1.25" height="41.2"/>
<rect x="1430.0" y="503.4" width="1.25" height="148.4"/>
<rect x="1447.8" y="503.4" width="1.25" height="119.6"/>
<rect x="1465.8" y="503.4" width="1.25" height="96.1"/>
<rect x="1470.8" y="503.4" width="1.25" height="26.9"/>
<rect x="1478.6" y="503.4" width="1.25" height="32.1"/>
<rect x="1483.6" y="503.4" width="1.25" height="94.8"/>
<rect x="1488.8" y="503.4" width="1.25" height="39.9"/>
<rect x="1496.6" y="503.4" width="1.25" height="94.8"/>
<rect x="1501.6" y="503.4" width="1.25" height="94.8"/>
<rect x="1506.6" y="503.4" width="1.25" height="11.2"/>
<rect x="1514.7" y="503.4" width="1.25" height="94.8"/>
<rect x="1519.6" y="503.4" width="1.25" height="94.8"/>
<rect x="1532.7" y="503.4" width="1.25" height="94.8"/>
<rect x="1537.6" y="503.4" width="1.25" height="85.7"/>
<rect x="1545.7" y="503.4" width="1.25" height="66.1"/>
<rect x="1550.5" y="503.4" width="1.25" height="94.8"/>
<rect x="1555.7" y="503.4" width="1.25" height="41.2"/>
<rect x="1564.0" y="503.4" width="1.25" height="94.8"/>
<rect x="1568.7" y="503.4" width="1.25" height="94.8"/>
<rect x="1573.7" y="503.4" width="1.25" height="21.6"/>
<rect x="1582.1" y="503.4" width="1.25" height="94.8"/>
<rect x="1591.7" y="503.4" width="1.25" height="6.0"/>
<rect x="1599.8" y="503.4" width="1.25" height="94.8"/>
<rect x="1604.8" y="503.4" width="1.25" height="90.9"/>
<rect x="1612.6" y="503.4" width="1.25" height="66.1"/>
<rect x="1617.9" y="503.4" width="1.25" height="94.8"/>
<rect x="1622.8" y="503.4" width="1.25" height="58.2"/>
<rect x="1630.7" y="503.4" width="1.25" height="94.8"/>
<rect x="1635.9" y="503.4" width="1.25" height="94.8"/>
<rect x="1640.6" y="503.4" width="1.25" height="25.6"/>
<rect x="1649.0" y="503.4" width="1.25" height="94.8"/>
<rect x="1653.7" y="503.4" width="1.25" height="94.8"/>
<rect x="1658.6" y="503.4" width="1.25" height="7.3"/>
</g>
<rect x="908" y="491" width="754.2" height="196" fill="none" stroke="#000" stroke-width="2"/>
<path d="M899 491.0H908" stroke="#000" stroke-width="2"/>
<text x="899.2" y="496.8" text-anchor="end" font-family='"Liberation Sans", sans-serif' font-size="16" font-weight="bold" fill="#000" stroke="#000" stroke-width=".35">26V</text>
<path d="M899 519.0H908" stroke="#000" stroke-width="2"/>
<text x="899.2" y="524.8" text-anchor="end" font-family='"Liberation Sans", sans-serif' font-size="16" font-weight="bold" fill="#000" stroke="#000" stroke-width=".35">22V</text>
<path d="M899 547.0H908" stroke="#000" stroke-width="2"/>
<text x="899.2" y="552.8" text-anchor="end" font-family='"Liberation Sans", sans-serif' font-size="16" font-weight="bold" fill="#000" stroke="#000" stroke-width=".35">18V</text>
<path d="M899 575.0H908" stroke="#000" stroke-width="2"/>
<text x="899.2" y="580.8" text-anchor="end" font-family='"Liberation Sans", sans-serif' font-size="16" font-weight="bold" fill="#000" stroke="#000" stroke-width=".35">14V</text>
<path d="M899 603.0H908" stroke="#000" stroke-width="2"/>
<text x="899.2" y="608.8" text-anchor="end" font-family='"Liberation Sans", sans-serif' font-size="16" font-weight="bold" fill="#000" stroke="#000" stroke-width=".35">10V</text>
<path d="M899 631.0H908" stroke="#000" stroke-width="2"/>
<text x="899.2" y="636.8" text-anchor="end" font-family='"Liberation Sans", sans-serif' font-size="16" font-weight="bold" fill="#000" stroke="#000" stroke-width=".35">6V</text>
<path d="M899 659.0H908" stroke="#000" stroke-width="2"/>
<text x="899.2" y="664.8" text-anchor="end" font-family='"Liberation Sans", sans-serif' font-size="16" font-weight="bold" fill="#000" stroke="#000" stroke-width=".35">2V</text>
<path d="M899 687.0H908" stroke="#000" stroke-width="2"/>
<text x="899.2" y="692.8" text-anchor="end" font-family='"Liberation Sans", sans-serif' font-size="16" font-weight="bold" fill="#000" stroke="#000" stroke-width=".35">-2V</text>
<text x="1262.5" y="484.7" font-family='"Liberation Sans", sans-serif' textLength="43.8" lengthAdjust="spacingAndGlyphs" font-size="16" font-weight="bold" fill="#ee10ee" stroke="#ee10ee" stroke-width=".3">V(sw)</text>
<path d="M908.0 687V695.4" stroke="#000" stroke-width="2"/>
<text x="908.0" y="710.3" text-anchor="middle" font-family='"Liberation Sans", sans-serif' font-size="16" font-weight="bold" fill="#000" stroke="#000" stroke-width=".35">0us</text>
<path d="M983.4 687V695.4" stroke="#000" stroke-width="2"/>
<text x="983.4" y="710.3" text-anchor="middle" font-family='"Liberation Sans", sans-serif' font-size="16" font-weight="bold" fill="#000" stroke="#000" stroke-width=".35">60us</text>
<path d="M1058.8 687V695.4" stroke="#000" stroke-width="2"/>
<text x="1058.8" y="710.3" text-anchor="middle" font-family='"Liberation Sans", sans-serif' font-size="16" font-weight="bold" fill="#000" stroke="#000" stroke-width=".35">120us</text>
<path d="M1134.3 687V695.4" stroke="#000" stroke-width="2"/>
<text x="1134.3" y="710.3" text-anchor="middle" font-family='"Liberation Sans", sans-serif' font-size="16" font-weight="bold" fill="#000" stroke="#000" stroke-width=".35">180us</text>
<path d="M1209.7 687V695.4" stroke="#000" stroke-width="2"/>
<text x="1209.7" y="710.3" text-anchor="middle" font-family='"Liberation Sans", sans-serif' font-size="16" font-weight="bold" fill="#000" stroke="#000" stroke-width=".35">240us</text>
<path d="M1285.1 687V695.4" stroke="#000" stroke-width="2"/>
<text x="1285.1" y="710.3" text-anchor="middle" font-family='"Liberation Sans", sans-serif' font-size="16" font-weight="bold" fill="#000" stroke="#000" stroke-width=".35">300us</text>
<path d="M1360.5 687V695.4" stroke="#000" stroke-width="2"/>
<text x="1360.5" y="710.3" text-anchor="middle" font-family='"Liberation Sans", sans-serif' font-size="16" font-weight="bold" fill="#000" stroke="#000" stroke-width=".35">360us</text>
<path d="M1435.9 687V695.4" stroke="#000" stroke-width="2"/>
<text x="1435.9" y="710.3" text-anchor="middle" font-family='"Liberation Sans", sans-serif' font-size="16" font-weight="bold" fill="#000" stroke="#000" stroke-width=".35">420us</text>
<path d="M1511.4 687V695.4" stroke="#000" stroke-width="2"/>
<text x="1511.4" y="710.3" text-anchor="middle" font-family='"Liberation Sans", sans-serif' font-size="16" font-weight="bold" fill="#000" stroke="#000" stroke-width=".35">480us</text>
<path d="M1586.8 687V695.4" stroke="#000" stroke-width="2"/>
<text x="1586.8" y="710.3" text-anchor="middle" font-family='"Liberation Sans", sans-serif' font-size="16" font-weight="bold" fill="#000" stroke="#000" stroke-width=".35">540us</text>
<path d="M1662.2 687V695.4" stroke="#000" stroke-width="2"/>
<text x="1662.2" y="710.3" text-anchor="middle" font-family='"Liberation Sans", sans-serif' font-size="16" font-weight="bold" fill="#000" stroke="#000" stroke-width=".35">600us</text>
</svg>
</body></html>
